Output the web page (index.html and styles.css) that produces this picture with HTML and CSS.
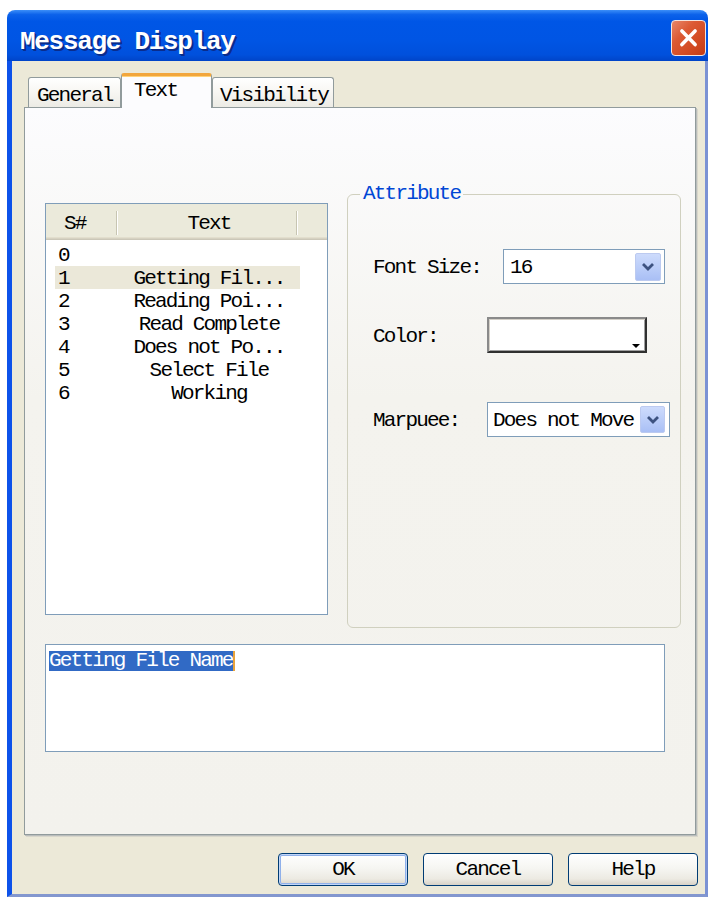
FILE: index.html
```html
<!DOCTYPE html>
<html lang="en">
<head>
<meta charset="utf-8">
<title>Message Display</title>
<link rel="stylesheet" href="styles.css">
</head>
<body>
<div class="window">
  <div class="titlebar">
    <span class="title">Message Display</span>
    <button class="close" aria-label="Close">
      <svg width="35" height="36" viewBox="0 0 35 36"><path d="M10.5 10.5 L24.5 25 M24.5 10.5 L10.5 25" stroke="#fff" stroke-width="3.8" stroke-linecap="round" fill="none"/></svg>
    </button>
  </div>
  <div class="client">
    <div class="tabs">
      <div class="tab tab-general">General</div>
      <div class="tab tab-text active">Text</div>
      <div class="tab tab-visibility">Visibility</div>
    </div>
    <div class="panel">
      <div class="row">
        <div class="list">
          <div class="list-head">
            <div class="h-sn">S#</div>
            <span class="sep"></span>
            <div class="h-text">Text</div>
            <span class="sep"></span>
          </div>
          <div class="list-body">
            <div class="item"><span class="sn">0</span><span class="txt"></span></div>
            <div class="item selected"><span class="sn">1</span><span class="txt">Getting Fil...</span></div>
            <div class="item"><span class="sn">2</span><span class="txt">Reading Poi...</span></div>
            <div class="item"><span class="sn">3</span><span class="txt">Read Complete</span></div>
            <div class="item"><span class="sn">4</span><span class="txt">Does not Po...</span></div>
            <div class="item"><span class="sn">5</span><span class="txt">Select File</span></div>
            <div class="item"><span class="sn">6</span><span class="txt">Working</span></div>
          </div>
        </div>
        <fieldset class="group">
          <legend>Attribute</legend>
          <div class="field field-size">
            <span class="label label-wide">Font Size:</span>
            <div class="combo combo-size">
              <span class="value">16</span>
              <span class="drop"><svg width="14" height="9" viewBox="0 0 14 9"><path d="M2 2 L7 7 L12 2" stroke="#3d5280" stroke-width="2.8" fill="none"/></svg></span>
            </div>
          </div>
          <div class="field field-color">
            <span class="label">Color:</span>
            <div class="colorbox">
              <svg width="8" height="4" viewBox="0 0 8 4"><path d="M0 0 H8 L4 4 Z" fill="#000"/></svg>
            </div>
          </div>
          <div class="field field-marquee">
            <span class="label">Marpuee:</span>
            <div class="combo combo-move">
              <span class="value">Does not Move</span>
              <span class="drop"><svg width="14" height="9" viewBox="0 0 14 9"><path d="M2 2 L7 7 L12 2" stroke="#3d5280" stroke-width="2.8" fill="none"/></svg></span>
            </div>
          </div>
        </fieldset>
      </div>
      <div class="editor"><span class="sel">Getting File Name</span><span class="caret"></span></div>
    </div>
    <div class="buttons">
      <button class="btn default">OK</button>
      <button class="btn">Cancel</button>
      <button class="btn">Help</button>
    </div>
  </div>
</div>
</body>
</html>
```

FILE: styles.css
```css
* { box-sizing: border-box; }

html, body {
  margin: 0;
  padding: 0;
  background: #ffffff;
}

body {
  font-family: "Liberation Mono", "Courier New", monospace;
  font-size: 21px;
  letter-spacing: -1.8px;
  color: #000;
}

button {
  font: inherit;
  letter-spacing: inherit;
  color: inherit;
  padding: 0;
  margin: 0;
}

/* ---- window frame ---- */
.window {
  margin: 10px 0 0 7px;
  width: 701px;
  height: 887px;
  display: flex;
  flex-direction: column;
}

.titlebar {
  height: 51px;
  flex: none;
  display: flex;
  align-items: flex-start;
  padding: 0 2px 0 13px;
  border-radius: 8px 8px 0 0;
  background: linear-gradient(#3c8ef8 0%, #0c62ea 9%, #0056e6 22%, #0055e4 60%, #0050dc 88%, #0044c8 100%);
}

.title {
  flex: 1;
  margin-top: 17px;
  line-height: 30px;
  font-size: 26px;
  font-weight: bold;
  letter-spacing: -1.3px;
  color: #ffffff;
  text-shadow: 1px 1px 0 #0a2c8c, 2px 2px 0 #0a2c8c;
}

.close {
  margin-top: 10px;
  width: 35px;
  height: 36px;
  border: 1px solid #f4e6e0;
  border-radius: 4px;
  background: linear-gradient(135deg, #e8876a 0%, #dc5a34 35%, #d24a22 70%, #c23c16 100%);
  display: flex;
  align-items: center;
  justify-content: center;
}
.close svg { display: block; }

.client {
  flex: 1;
  display: flex;
  flex-direction: column;
  background: #ece9d8;
  border-left: 5px solid #0d52ea;
  border-right: 3px solid #7b92d4;
  border-bottom: 3px solid #8397cf;
  padding: 12px 9px 0 12px;
}

/* ---- tabs ---- */
.tabs {
  height: 34px;
  flex: none;
  display: flex;
  align-items: flex-end;
  padding-left: 4px;
  position: relative;
  z-index: 1;
}

.tab {
  height: 30px;
  border: 1px solid #919b9c;
  border-bottom: none;
  border-radius: 3px 3px 0 0;
  background: linear-gradient(#ffffff, #f7f6f2 50%, #ecebe5);
  padding-top: 7px;
  line-height: 22px;
  white-space: nowrap;
}
.tab-general { width: 93px; padding-left: 8px; }
.tab-visibility { width: 122px; padding-left: 7px; }

.tab.active {
  width: 91px;
  height: 35px;
  margin-bottom: -1px;
  padding-left: 12px;
  padding-top: 4px;
  border-top: 3px solid #f2a63c;
  box-shadow: inset 0 1px 0 #ffd27a;
  background: #fcfcfe;
}

.panel {
  height: 728px;
  flex: none;
  border: 1px solid #919b9c;
  box-shadow: 1px 1px 0 #b9bdbc, 2px 2px 0 #d8d6cb;
  background: linear-gradient(#fcfcfe, #f4f3ee 40%, #f3f2ed);
  padding: 76px 0 0 20px;
}

.row {
  display: flex;
  align-items: flex-start;
}

/* ---- list view ---- */
.list {
  margin-top: 19px;
  width: 283px;
  height: 412px;
  border: 1px solid #7f9db9;
  background: #ffffff;
}

.list-head {
  height: 36px;
  display: flex;
  align-items: center;
  background: #ebeadb;
  box-shadow: inset 0 -1px 0 #cbc7b8, inset 0 -2px 0 #d6d2c2, inset 0 -3px 0 #e2decd;
  padding-top: 2px;
}

.h-sn {
  width: 70px;
  padding-left: 18px;
}

.h-text {
  width: 178px;
  padding-left: 4px;
  text-align: center;
}

.sep {
  width: 2px;
  height: 24px;
  border-left: 1px solid #c7c5b2;
  border-right: 1px solid #ffffff;
}

.list-body {
  padding-top: 3px;
}

.item {
  margin-left: 9px;
  width: 245px;
  height: 23px;
  line-height: 25px;
  display: grid;
  grid-template-columns: 63px 182px;
  white-space: nowrap;
}
.item .sn { padding-left: 3px; }
.item .txt { text-align: center; }
.item.selected { background: #ebe8d9; }

/* ---- attribute group ---- */
.group {
  margin: 0 0 0 19px;
  width: 334px;
  height: 444px;
  border: 1px solid #d0d0bf;
  border-radius: 6px;
  padding: 0 0 0 25px;
  min-width: 0;
}

.group legend {
  margin-left: -13px;
  padding: 0 3px;
  line-height: 20px;
  color: #0046d5;
}

.field {
  display: flex;
  align-items: center;
}
.field-size { margin-top: 45px; }
.field-color { margin-top: 33px; }
.field-marquee { margin-top: 49px; }

.label { width: 114px; flex: none; padding-top: 2px; }
.label-wide { width: 130px; }

.combo {
  height: 35px;
  border: 1px solid #7f9db9;
  background: #ffffff;
  display: flex;
  align-items: center;
}
.combo-size { width: 162px; padding-left: 6px; }
.combo-move { width: 183px; padding-left: 5px; }

.combo .value { flex: 1; white-space: nowrap; padding-top: 2px; }

.drop {
  flex: none;
  width: 26px;
  height: 28px;
  margin-right: 3px;
  border: 1px solid #bccaf0;
  border-radius: 2px;
  background: linear-gradient(#cddbfc, #b8cbf8 60%, #a9bff5);
  display: flex;
  align-items: center;
  justify-content: center;
}
.combo-move .drop { width: 25px; height: 27px; margin-right: 4px; }
.drop svg { display: block; }

.colorbox {
  width: 160px;
  height: 36px;
  background: #ffffff;
  border-style: solid;
  border-width: 2px;
  border-color: #8a8a8a #303030 #303030 #8a8a8a;
  box-shadow: inset 1px 1px 0 #d4d0c8, inset -1px -1px 0 #a0a0a0;
  display: flex;
  align-items: flex-end;
  justify-content: flex-end;
  padding: 0 5px 3px 0;
}
.colorbox svg { display: block; }

/* ---- text editor ---- */
.editor {
  margin-top: 16px;
  width: 620px;
  height: 108px;
  border: 1px solid #7f9db9;
  background: #ffffff;
  padding: 6px 3px;
  line-height: 20px;
  display: flex;
  align-items: flex-start;
}
.editor .sel {
  background: #316ac5;
  color: #ffffff;
  white-space: nowrap;
}
.editor .caret {
  width: 2px;
  height: 20px;
  background: #e8a33a;
}

/* ---- dialog buttons ---- */
.buttons {
  display: flex;
  justify-content: flex-end;
  gap: 15px;
  margin: 18px -2px 0 0;
}

.btn {
  width: 130px;
  height: 33px;
  border: 1px solid #003c74;
  border-radius: 4px;
  background: linear-gradient(#ffffff, #f6f6f2 45%, #eceae2 80%, #d8d2c6);
  text-align: center;
  line-height: 32px;
}
.btn.default {
  box-shadow: inset 0 0 0 1px #c2d6f7, inset 0 0 0 2px #8fb0ea;
}
```
